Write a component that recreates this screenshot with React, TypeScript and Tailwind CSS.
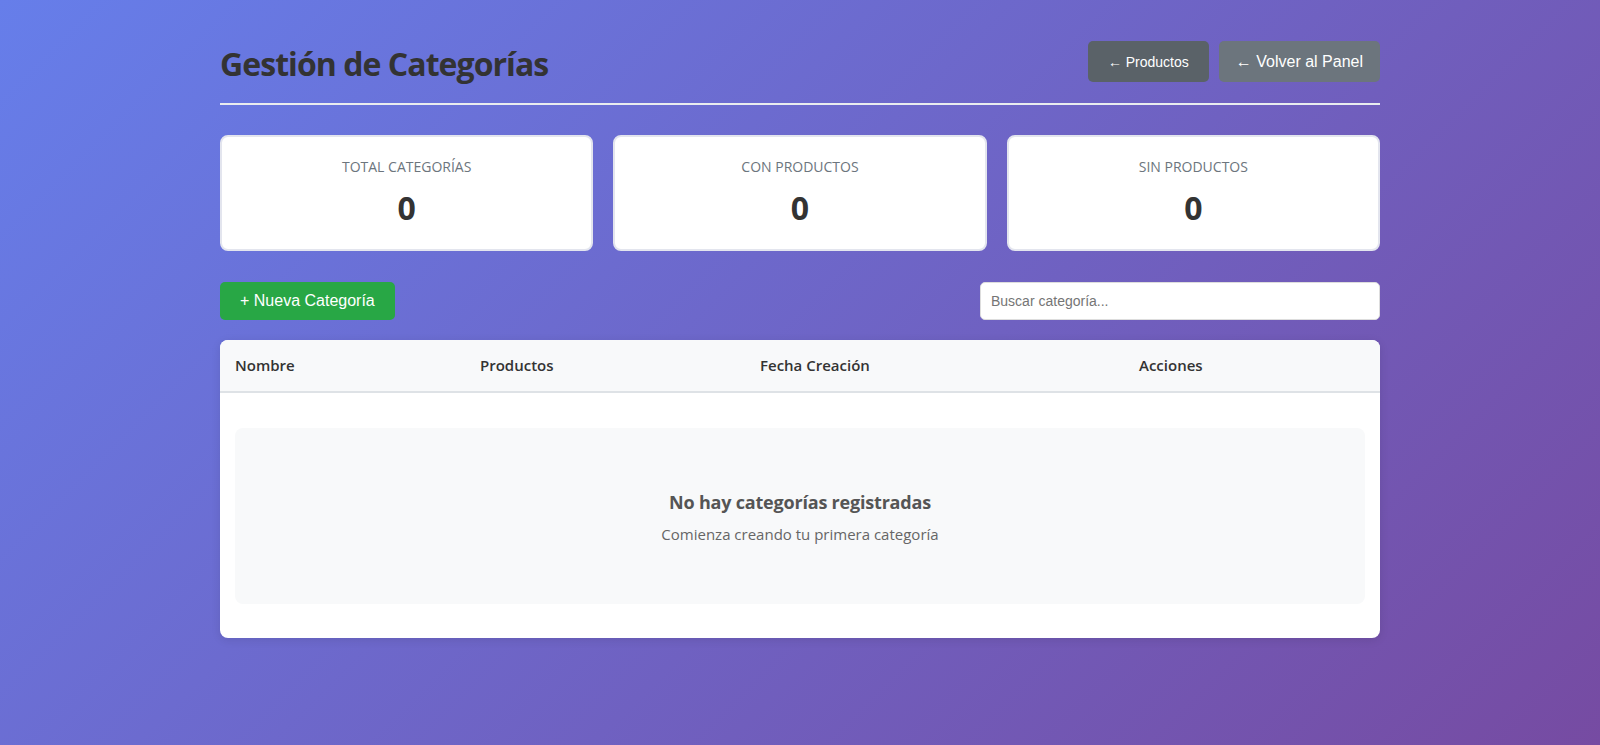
const stats = [
  { label: "Total Categorías", value: 0 },
  { label: "Con Productos", value: 0 },
  { label: "Sin Productos", value: 0 },
];

const columns = ["Nombre", "Productos", "Fecha Creación", "Acciones"];

const StatCard = ({ label, value }: { label: string; value: number }) => (
  <div className="bg-white rounded-lg border-2 border-[#e3e5ee] px-5 py-5 text-center">
    <div className="text-sm uppercase text-[#6c757d] leading-[19px]">{label}</div>
    <div className="mt-2.5 text-[32px] font-bold text-[#333] leading-[43px]">{value}</div>
  </div>
);

const App = () => {
  return (
    <div
      className="min-h-[745px] bg-[linear-gradient(135deg,#667eea_0%,#764ba2_100%)] p-5 text-[#333]"
      style={{ fontFamily: '"Open Sans", "Noto Sans", sans-serif' }}
    >
      <div className="max-w-[1200px] mx-auto p-5">
        {/* header */}
        <div className="flex items-start justify-between pb-[15px] border-b-2 border-[#e9ecef] mb-[30px]">
          <h1 className="text-[32px] font-bold leading-[48px] text-[#333] tracking-[-0.95px]">
            Gestión de Categorías
          </h1>
          <div className="flex gap-2.5 pt-px font-['Liberation_Sans',Arial,sans-serif]">
            <button className="bg-[#5a6268] text-white text-sm rounded-[5px] px-5 h-[41px]">
              ← Productos
            </button>
            <button className="bg-[#6c757d] text-white text-base rounded-[5px] px-[17px] h-[41px]">
              ← Volver al Panel
            </button>
          </div>
        </div>

        {/* stats */}
        <div className="grid grid-cols-3 gap-5 mb-[31px]">
          {stats.map((s) => (
            <StatCard key={s.label} label={s.label} value={s.value} />
          ))}
        </div>

        {/* actions */}
        <div className="flex items-center justify-between mb-5 font-['Liberation_Sans',Arial,sans-serif]">
          <button className="bg-[#28a745] text-white text-base rounded-[5px] px-5 h-[38px]">
            + Nueva Categoría
          </button>
          <input
            className="w-[400px] h-[38px] bg-white border border-[#ddd] rounded-[5px] px-2.5 text-sm placeholder:text-[#757575] outline-none"
            placeholder="Buscar categoría..."
          />
        </div>

        {/* table */}
        <div className="bg-white rounded-lg overflow-hidden shadow-[0_2px_10px_rgba(0,0,0,0.1)]">
          <div className="grid grid-cols-[245px_280px_379px_1fr] bg-[#f8f9fa] border-b-2 border-[#dee2e6] h-[53px] items-center">
            {columns.map((c) => (
              <div key={c} className="px-[15px] font-semibold text-[15px] text-[#333]">
                {c}
              </div>
            ))}
          </div>
          <div className="px-[15px] pt-[35px] pb-[34px]">
            <div className="bg-[#f8f9fa] rounded-lg h-[176px] pt-[3px] flex flex-col items-center justify-center">
              <h3 className="text-lg font-bold text-[#555] leading-6 tracking-[-0.2px]">
                No hay categorías registradas
              </h3>
              <p className="mt-2 text-[15px] text-[#666] leading-6">
                Comienza creando tu primera categoría
              </p>
            </div>
          </div>
        </div>
      </div>
    </div>
  );
};

export default App;
